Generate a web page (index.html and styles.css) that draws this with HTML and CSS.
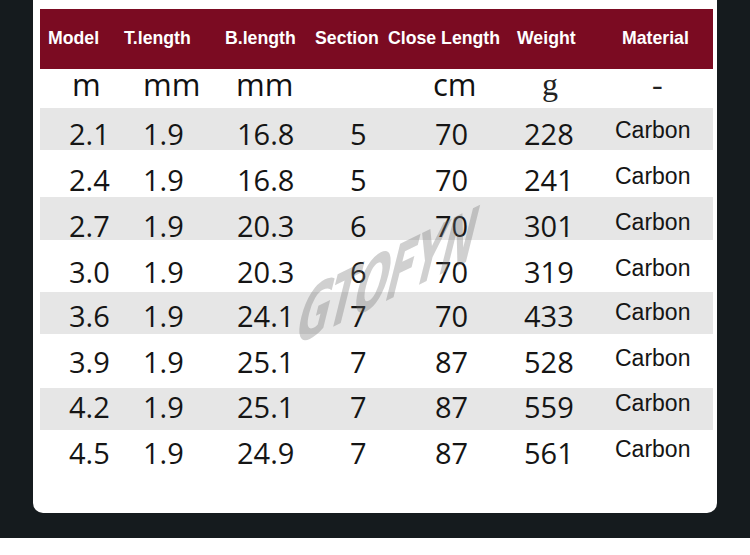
FILE: index.html
```html
<!DOCTYPE html>
<html>
<head>
<meta charset="utf-8">
<link rel="stylesheet" href="styles.css">
</head>
<body>
<div class="stage">
  <div class="card">
    <div class="head">
      <span>Model</span><span>T.length</span><span>B.length</span><span>Section</span><span>Close Length</span><span>Weight</span><span>Material</span>
    </div>
    <div class="units">
      <span>m</span><span>mm</span><span>mm</span><span></span><span>cm</span><span class="serif">g</span><span class="serif dash">-</span>
    </div>
    <div class="row grey r1"><span>2.1</span><span>1.9</span><span>16.8</span><span>5</span><span>70</span><span>228</span><span class="mat">Carbon</span></div>
    <div class="row r2"><span>2.4</span><span>1.9</span><span>16.8</span><span>5</span><span>70</span><span>241</span><span class="mat">Carbon</span></div>
    <div class="row grey r3"><span>2.7</span><span>1.9</span><span>20.3</span><span>6</span><span>70</span><span>301</span><span class="mat">Carbon</span></div>
    <div class="row r4"><span>3.0</span><span>1.9</span><span>20.3</span><span>6</span><span>70</span><span>319</span><span class="mat">Carbon</span></div>
    <div class="row grey r5"><span>3.6</span><span>1.9</span><span>24.1</span><span>7</span><span>70</span><span>433</span><span class="mat">Carbon</span></div>
    <div class="row r6"><span>3.9</span><span>1.9</span><span>25.1</span><span>7</span><span>87</span><span>528</span><span class="mat">Carbon</span></div>
    <div class="row grey r7"><span>4.2</span><span>1.9</span><span>25.1</span><span>7</span><span>87</span><span>559</span><span class="mat">Carbon</span></div>
    <div class="row r8"><span>4.5</span><span>1.9</span><span>24.9</span><span>7</span><span>87</span><span>561</span><span class="mat">Carbon</span></div>
    <div class="wm">GTOFYN</div>
  </div>
</div>
</body>
</html>
```
FILE: styles.css
```css
html, body {
  margin: 0;
  padding: 0;
  background: #ffffff;
}
.stage {
  height: 538px;
  background: #151b1e;
  padding-left: 33px;
  box-sizing: border-box;
}
.card {
  position: relative;
  width: 684px;
  height: 513px;
  background: #ffffff;
  border-radius: 0 0 10px 10px;
  padding: 9px 4px 0 7px;
  box-sizing: border-box;
  overflow: hidden;
}
.head {
  height: 60px;
  background: #7b0b22;
  display: grid;
  grid-template-columns: 76px 101px 90px 73px 129px 105px 1fr;
  padding: 19px 0 0 8px;
  box-sizing: border-box;
  font-family: "Liberation Sans", Arial, sans-serif;
  font-weight: bold;
  font-size: 17.7px;
  line-height: 20px;
  color: #ffffff;
  white-space: nowrap;
}
.units {
  height: 39px;
  display: grid;
  grid-template-columns: 71px 93px 114px 83px 109px 110px 1fr;
  padding-left: 32px;
  font-family: "Open Sans", "Noto Sans", sans-serif;
  font-weight: 400;
  font-size: 31px;
  line-height: 31px;
  color: #111111;
}
.units .serif {
  font-family: "Liberation Serif", "Times New Roman", serif;
  font-weight: normal;
  font-size: 32px;
  color: #222222;
}
.row {
  display: grid;
  grid-template-columns: 74px 94px 113px 85px 89px 91px 1fr;
  align-items: start;
  padding-left: 29px;
  box-sizing: border-box;
  font-family: "Open Sans", "Noto Sans", sans-serif;
  font-weight: 400;
  font-size: 29px;
  line-height: 29px;
  color: #151515;
}
.row.grey {
  background: #e6e6e6;
}
.row .mat {
  font-family: "Liberation Sans", Arial, sans-serif;
  font-weight: normal;
  font-size: 23px;
  line-height: 23px;
}
.r1 { height: 42px; padding-top: 11px; }
.r2 { height: 47px; padding-top: 15px; }
.r3 { height: 43px; padding-top: 14px; }
.r4 { height: 52px; padding-top: 17px; }
.r5 { height: 42px; padding-top: 9px; }
.r6 { height: 54px; padding-top: 13px; }
.r7 { height: 42px; padding-top: 4px; }
.r8 { height: 45px; padding-top: 8px; }
.wm {
  position: absolute;
  left: 218px;
  top: 247px;
  font-family: "DejaVu Sans", sans-serif;
  font-weight: bold;
  font-size: 62px;
  line-height: 60px;
  color: rgba(110, 110, 110, 0.32);
  transform: rotate(-26deg) skewX(-40deg) scaleX(0.72);
  transform-origin: center;
  white-space: nowrap;
  letter-spacing: -2px;
}
```
